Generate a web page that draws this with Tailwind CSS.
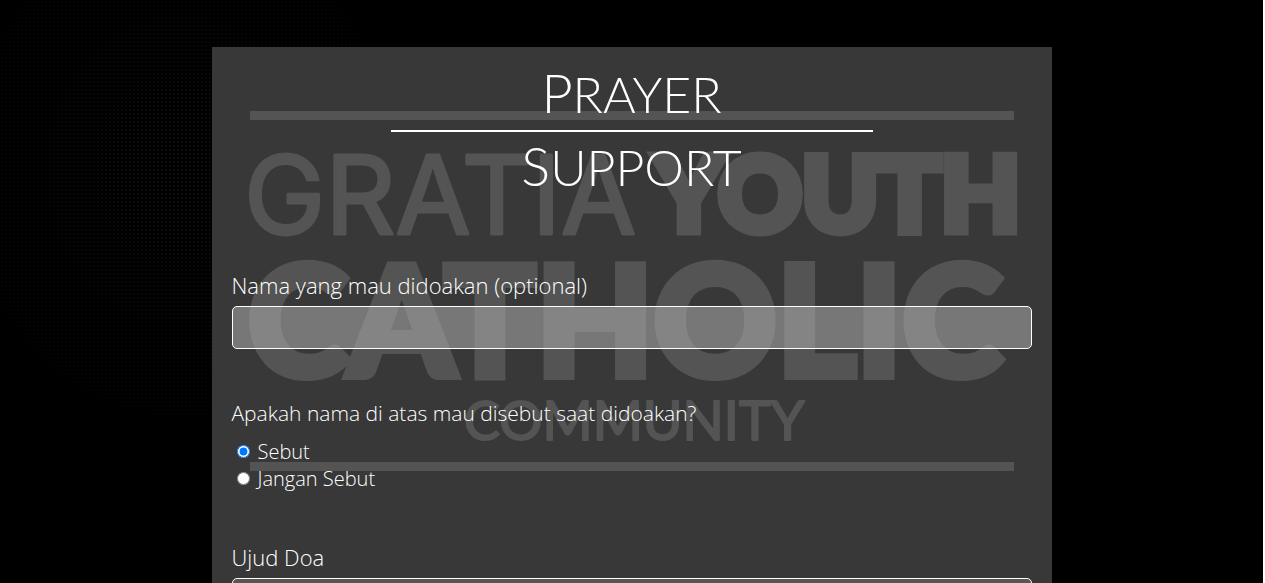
<!DOCTYPE html>
<html lang="id">
<head>
<meta charset="utf-8">
<meta name="viewport" content="width=device-width, initial-scale=1">
<title>Prayer Support</title>
<script src="https://cdn.jsdelivr.net/npm/@tailwindcss/browser@4"></script>
</head>
<body class="overflow-x-hidden bg-white font-['Open_Sans',sans-serif] font-light text-white">
<div class="relative mr-[2px] h-screen overflow-hidden bg-black pt-[47px]">
  <div class="absolute inset-0 bg-[radial-gradient(circle,#161616_0.5px,transparent_1px)] bg-size-[4px_4px] mask-[radial-gradient(ellipse_260px_300px_at_180px_170px,black,transparent)]"></div>
  <main class="relative mx-auto min-h-screen max-w-[840px] bg-[#383838] px-5 pt-[18px]">
    <svg class="absolute top-0 left-0 w-full" viewBox="0 0 840 440" fill="#545454" stroke="#545454" stroke-linejoin="round" aria-hidden="true">
      <path stroke="none" d="M38 64h764v9H38zM38 415h764v9H38z"/>
      <text x="32" y="187" font-family="Inter" font-weight="400" font-size="109" stroke-width="3">GRATIA</text>
      <text x="443" y="184" font-family="Lato" font-weight="900" font-size="103" stroke-width="9" stroke-linejoin="miter">YOUTH</text>
      <text x="36" y="329" font-family="Lato" font-weight="900" font-size="152" stroke-width="8" stroke-linejoin="miter">CATHOLIC</text>
      <text x="252" y="393" font-family="Lato" font-weight="400" font-size="54" stroke-width="2">COMMUNITY</text>
    </svg>
    <form class="relative">
      <h1 class="flex flex-col items-center font-['Lato',sans-serif] text-[50px] font-light uppercase">
        <span class="w-[482px] max-w-full border-b-2 border-white pb-2 text-center leading-[56px] first-letter:text-[54px]">Prayer</span>
        <span class="block pt-1.5 leading-[56px] first-letter:text-[54px]">Support</span>
      </h1>
      <div class="mt-[75px]">
        <label for="nama" class="block text-[22px] leading-[30px]">Nama yang mau didoakan (optional)</label>
        <input id="nama" type="text" class="mt-1.5 block h-[43px] w-full rounded-[5px] border border-white bg-[#afafaf]/53 px-3 text-white">
      </div>
      <fieldset class="mt-[49px]">
        <legend class="text-[21px] leading-[30px]">Apakah nama di atas mau disebut saat didoakan?</legend>
        <div class="mt-2.5 text-xl leading-[27px]">
          <div class="flex items-center gap-2 pl-[5px]"><input id="sebut" type="radio" name="sebut" checked class="size-[13px]"><label for="sebut">Sebut</label></div>
          <div class="flex items-center gap-2 pl-[5px]"><input id="jangan" type="radio" name="sebut" class="size-[13px]"><label for="jangan">Jangan Sebut</label></div>
        </div>
      </fieldset>
      <div class="mt-[50px]">
        <label for="ujud" class="block text-[22px] leading-[30px]">Ujud Doa</label>
        <textarea id="ujud" rows="5" class="mt-1.5 block w-full rounded-[5px] border border-white bg-[#afafaf]/25 px-3 text-white"></textarea>
      </div>
    </form>
  </main>
</div>
</body>
</html>
